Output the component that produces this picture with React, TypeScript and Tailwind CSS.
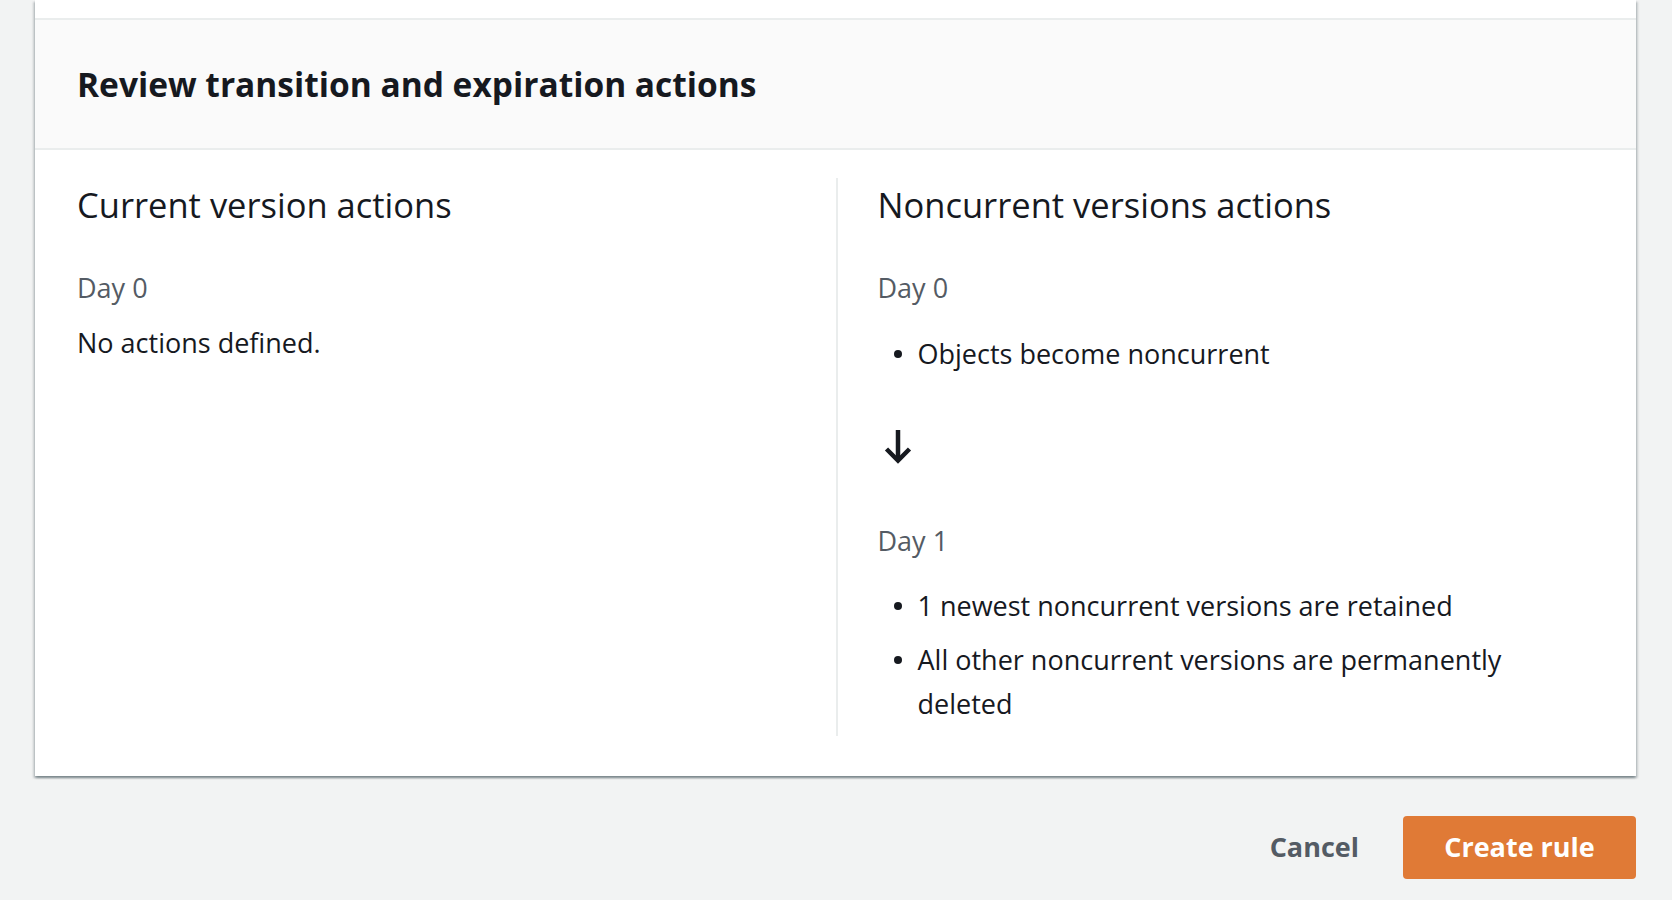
import React from "react";

const font = { fontFamily: "'Open Sans', Lato, sans-serif" };

const Bullet = ({ children }: { children: React.ReactNode }) => (
  <li className="flex">
    <span className="flex h-[44px] w-[40px] shrink-0 items-center justify-center">
      <span className="h-[8px] w-[8px] rounded-full bg-[#16191f]" />
    </span>
    <span className="text-[27px] leading-[44px] text-[#16191f]">{children}</span>
  </li>
);

const ArrowDown = () => (
  <svg width="28" height="36" viewBox="0 0 28 36" fill="none" className="ml-[6px]">
    <path d="M14 2 V32" stroke="#16191f" strokeWidth="4.5" />
    <path d="M2.5 21 L14 32.5 L25.5 21" stroke="#16191f" strokeWidth="4.5" strokeLinejoin="miter" />
  </svg>
);

export default function App() {
  return (
    <div className="h-[900px] w-full overflow-hidden bg-[#f2f3f3] pl-[35px] pr-[36px]" style={font}>
      {/* Card */}
      <div className="bg-white shadow-[0_2px_2px_0_rgba(0,28,36,0.3),2px_2px_2px_0_rgba(0,28,36,0.15),-2px_2px_2px_0_rgba(0,28,36,0.15)]">
        <div className="h-[18px]" />

        {/* Header */}
        <div className="flex h-[132px] items-center border-y-2 border-[#eaeded] bg-[#fafafa] px-[42px]">
          <h2 className="text-[33.5px] font-bold leading-[40px] text-[#16191f]">
            Review transition and expiration actions
          </h2>
        </div>

        {/* Columns */}
        <div className="grid grid-cols-2 pt-[28px] pb-[40px]">
          <div className="pl-[42px] pr-[42px]">
            <h3 className="text-[34.5px] leading-[54px] text-[#16191f]">Current version actions</h3>
            <p className="mt-[36px] text-[27px] leading-[40px] text-[#545b64]">Day 0</p>
            <p className="mt-[13px] text-[27px] leading-[44px] text-[#16191f]">No actions defined.</p>
          </div>

          <div className="border-l-2 border-[#eaeded] pl-[40px] pr-[42px] pb-[10px]">
            <h3 className="text-[34.5px] leading-[54px] text-[#16191f]">Noncurrent versions actions</h3>
            <p className="mt-[36px] text-[27px] leading-[40px] text-[#545b64]">Day 0</p>
            <ul className="mt-[24px]">
              <Bullet>Objects become noncurrent</Bullet>
            </ul>
            <div className="mt-[52px]">
              <ArrowDown />
            </div>
            <p className="mt-[57px] text-[27px] leading-[40px] text-[#545b64]">Day 1</p>
            <ul className="mt-[23px] flex flex-col gap-[10px]">
              <Bullet>1 newest noncurrent versions are retained</Bullet>
              <Bullet>
                All other noncurrent versions are permanently
                <br />
                deleted
              </Bullet>
            </ul>
          </div>
        </div>
      </div>

      {/* Footer actions */}
      <div className="mt-[40px] flex items-center justify-end">
        <button className="mr-[44px] text-[27px] font-bold text-[#545b64]">Cancel</button>
        <button className="h-[63px] w-[233px] rounded-[4px] bg-[#e07a36] text-[27px] font-bold text-white">
          Create rule
        </button>
      </div>
    </div>
  );
}
